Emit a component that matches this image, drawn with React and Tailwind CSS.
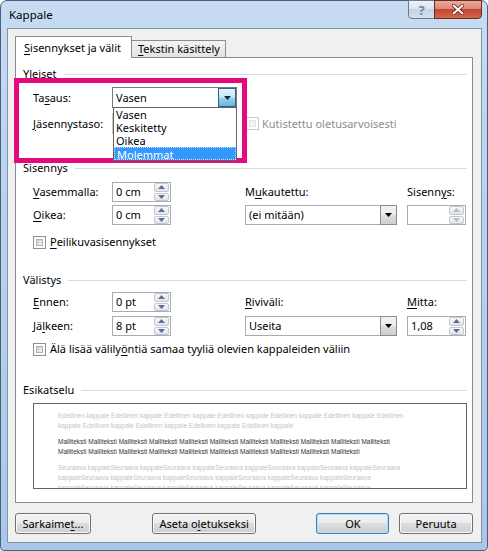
import React from 'react';

const font = "font-['Noto_Sans','Segoe_UI',sans-serif]";

function U({ children }) {
  return <span className="underline decoration-1 underline-offset-[2px]">{children}</span>;
}

function Arrow({ up, color }) {
  return (
    <svg width="7" height="4" viewBox="0 0 7 4">
      <path d={up ? 'M3.5 0L7 4H0z' : 'M0 0h7L3.5 4z'} fill={color} />
    </svg>
  );
}

function Spin({ value, disabled }) {
  const arrow = disabled ? '#b4bccb' : '#5b6d9e';
  return (
    <div className="w-[59px] h-[20px] border border-[#a5acb5] bg-white flex">
      <div className="flex-1 pl-[3px] flex items-center">{value}</div>
      <div className="w-[15px] flex flex-col gap-px mr-px">
        <div className="flex-1 border border-[#c3c7ce] rounded-[2px] bg-gradient-to-b from-[#f8f8f8] to-[#e2e4e8] flex items-center justify-center">
          <Arrow up color={arrow} />
        </div>
        <div className="flex-1 border border-[#c3c7ce] rounded-[2px] bg-gradient-to-b from-[#f8f8f8] to-[#e2e4e8] flex items-center justify-center">
          <Arrow color={arrow} />
        </div>
      </div>
    </div>
  );
}

function Combo({ value }) {
  return (
    <div className="w-[152px] h-[20px] border border-[#a5acb5] bg-white flex items-center">
      <span className="flex-1 pl-[3px]">{value}</span>
      <div className="w-[17px] h-[20px] -mr-px border border-[#8a8d93] bg-[linear-gradient(to_bottom,#f2f2f2_0%,#ebebeb_50%,#dddddd_50%,#cfcfcf_100%)] flex items-center justify-center">
        <Arrow color="#000" />
      </div>
    </div>
  );
}

function Check({ disabled }) {
  return (
    <div className={`w-[13px] h-[13px] border p-[2px] bg-white ${disabled ? 'border-[#c9c9c9]' : 'border-[#8e8f8f]'}`}>
      <div className={`w-full h-full border ${disabled ? 'border-[#e2e2e2] bg-[#f5f5f5]' : 'border-[#aeb3b9] bg-gradient-to-br from-[#cbcfd5] to-[#f6f6f6]'}`}></div>
    </div>
  );
}

function Btn({ children, className, primary }) {
  return (
    <div
      className={`${className} h-[21px] rounded-[3px] border ${
        primary ? 'border-[#3c7fb1] shadow-[inset_0_0_0_1px_#aee0f7]' : 'border-[#707070] shadow-[inset_0_0_0_1px_#fbfbfb]'
      } bg-[linear-gradient(to_bottom,#f2f2f2_0%,#ebebeb_50%,#dddddd_50%,#cfcfcf_100%)] flex items-center justify-center`}
    >
      {children}
    </div>
  );
}

function Group({ title, className }) {
  return (
    <div className={`flex items-center h-[16px] ${className}`}>
      <span>{title}</span>
      <div className="flex-1 h-px bg-[#d5dce2] ml-[7px]"></div>
    </div>
  );
}

const previous = [
  'Edellinen kappale Edellinen kappale Edellinen kappale Edellinen kappale Edellinen kappale Edellinen kappale Edellinen',
  'kappale Edellinen kappale Edellinen kappale Edellinen kappale Edellinen kappale',
];
const sample = ['Malliteksti '.repeat(11).trim(), 'Malliteksti '.repeat(10).trim()];
const next = [
  'Seuraava kappaleSeuraava kappaleSeuraava kappaleSeuraava kappaleSeuraava kappaleSeuraava kappaleSeuraava',
  'kappaleSeuraava kappaleSeuraava kappaleSeuraava kappaleSeuraava kappaleSeuraava kappaleSeuraava',
  'kappaleSeuraava kappaleSeuraava kappaleSeuraava kappaleSeuraava kappaleSeuraava kappaleSeuraava',
];
const alignments = ['Vasen', 'Keskitetty', 'Oikea', 'Molemmat'];

export default function App() {
  return (
    <div className={`w-[488px] h-[551px] ${font} text-[11px] leading-[16px] text-black`}>
      <div className="w-full h-full rounded-t-[7px] rounded-b-[4px] border border-[#4d6079] bg-[linear-gradient(to_bottom,#c7dcf2,#b9d4ef_30%,#a9c8e9)] flex flex-col">
        {/* title bar */}
        <div className="h-[27px] flex justify-between">
          <div className="pl-[8px] pt-[6px] text-[11.5px]">Kappale</div>
          <div className="flex -mt-px mr-[5px] h-[19px]">
            <div className="w-[27px] h-full rounded-bl-[4px] border border-[#6a7a90] bg-[linear-gradient(to_bottom,#edf2f8_0%,#dbe5f1_45%,#c4d3e6_50%,#d3e0ee_100%)] flex items-center justify-center text-[13px] font-bold text-[#7b8594]">
              ?
            </div>
            <div className="w-[48px] h-full -ml-px rounded-br-[4px] border border-[#6b2a20] bg-[linear-gradient(to_bottom,#e9a99b_0%,#dc8a76_45%,#c5452f_50%,#d2684f_100%)] flex items-center justify-center">
              <svg width="12" height="11" viewBox="0 0 12 11">
                <path d="M1.5 1.5l9 8M10.5 1.5l-9 8" stroke="#5a1d14" strokeWidth="3.6" strokeLinecap="round" />
                <path d="M1.5 1.5l9 8M10.5 1.5l-9 8" stroke="#ffffff" strokeWidth="2" strokeLinecap="round" />
              </svg>
            </div>
          </div>
        </div>

        {/* client */}
        <div className="ml-[6px] mr-[5px] h-[515px] border border-[#8393a8] bg-[#f0f0f0] pt-[7px] pl-[7px] pr-[8px] flex flex-col">
          {/* tabs */}
          <div className="flex h-[21px]">
            <div className="relative z-10 w-[117px] h-[22px] border border-b-0 border-[#898c95] bg-white pl-[8px] pt-[3px] whitespace-nowrap">
              <U>S</U>isennykset ja välit
            </div>
            <div className="self-end w-[95px] h-[17px] -ml-px border border-b-0 border-[#898c95] bg-gradient-to-b from-[#f3f3f3] to-[#e3e3e3] pl-[6px] leading-[16px] whitespace-nowrap">
              <U>T</U>ekstin käsittely
            </div>
          </div>

          {/* panel */}
          <div className="relative w-[458px] h-[446px] border border-[#898c95] bg-white pl-[7px] pr-[5px]">
            <Group title="Yleiset" className="mt-[8px]" />

            <div className="flex items-center h-[21px] mt-[5px] ml-[10px]">
              <div className="w-[79px]">
                Ta<U>s</U>aus:
              </div>
              <div className="relative w-[125px] h-[21px] border border-[#7a7a7a] bg-white flex items-center">
                <span className="flex-1 pl-[3px]">Vasen</span>
                <div className="w-[18px] h-[19px] border border-[#2c628b] bg-[linear-gradient(to_bottom,#e5f4fc_0%,#c4e5f6_50%,#98d1ef_50%,#6cb6df_100%)] flex items-center justify-center">
                  <Arrow color="#0d2a43" />
                </div>
                <div className="absolute z-20 left-[0px] top-full w-[124px] border border-[#646464] bg-white">
                  {alignments.map((a) => (
                    <div
                      key={a}
                      className={`h-[13px] leading-[13px] pl-[2px] ${
                        a === 'Molemmat' ? 'bg-[#3399ff] text-white border border-dotted border-[#c8e0f8] pl-[1px] leading-[11px]' : ''
                      }`}
                    >
                      {a}
                    </div>
                  ))}
                </div>
              </div>
            </div>

            <div className="flex items-center h-[21px] mt-[5px] ml-[10px]">
              <div className="w-[79px]">
                <U>J</U>äsennystaso:
              </div>
              <div className="w-[125px] h-[21px] border border-[#c9c9c9] bg-[#f4f4f4]"></div>
              <div className="ml-[9px] flex items-center gap-[3px] text-[#8d8d8d]">
                <Check disabled />
                <span>Kutistettu oletusarvoisesti</span>
              </div>
            </div>

            <Group title="Sisennys" className="mt-[26px]" />
            <div className="flex mt-[6px] ml-[10px]">
              <div className="flex flex-col gap-[3px]">
                <div className="flex items-center">
                  <div className="w-[79px]">
                    <U>V</U>asemmalla:
                  </div>
                  <Spin value="0 cm" />
                </div>
                <div className="flex items-center">
                  <div className="w-[79px]">
                    <U>O</U>ikea:
                  </div>
                  <Spin value="0 cm" />
                </div>
              </div>
              <div className="ml-[74px] flex flex-col gap-[3px]">
                <div className="h-[20px] flex items-center">
                  M<U>u</U>kautettu:
                </div>
                <Combo value="(ei mitään)" />
              </div>
              <div className="ml-[10px] flex flex-col gap-[3px]">
                <div className="h-[20px] flex items-center">
                  Sisenn<U>y</U>s:
                </div>
                <Spin value="" disabled />
              </div>
            </div>
            <div className="flex items-center gap-[4px] h-[16px] mt-[9px] ml-[10px]">
              <Check />
              <span>
                <U>P</U>eilikuvasisennykset
              </span>
            </div>

            <Group title="Välistys" className="mt-[22px]" />
            <div className="flex mt-[4px] ml-[10px]">
              <div className="flex flex-col gap-[4px]">
                <div className="flex items-center">
                  <div className="w-[79px]">
                    <U>E</U>nnen:
                  </div>
                  <Spin value="0 pt" />
                </div>
                <div className="flex items-center">
                  <div className="w-[79px]">
                    Jä<U>l</U>keen:
                  </div>
                  <Spin value="8 pt" />
                </div>
              </div>
              <div className="ml-[74px] flex flex-col gap-[4px]">
                <div className="h-[20px] flex items-center">
                  <U>R</U>iviväli:
                </div>
                <Combo value="Useita" />
              </div>
              <div className="ml-[10px] flex flex-col gap-[4px]">
                <div className="h-[20px] flex items-center">
                  <U>M</U>itta:
                </div>
                <Spin value="1,08" />
              </div>
            </div>
            <div className="flex items-center gap-[4px] h-[16px] mt-[5px] ml-[10px]">
              <Check />
              <span>
                Älä lisää välily<U>ö</U>ntiä samaa tyyliä olevien kappaleiden väliin
              </span>
            </div>

            <Group title="Esikatselu" className="mt-[25px]" />
            <div className="mt-[5px] ml-[10px] h-[86px] border border-[#646464] bg-white overflow-hidden pl-[24px] pt-[7px] font-['Liberation_Sans',sans-serif] text-[6.5px] leading-[10px] whitespace-nowrap">
              {previous.map((l) => (
                <div key={l} className="text-[#c4c4c4]">
                  {l}
                </div>
              ))}
              <div className="mt-[6px] text-[#333333]">
                {sample.map((l, i) => (
                  <div key={i}>{l}</div>
                ))}
              </div>
              <div className="mt-[6px] text-[#c4c4c4]">
                {next.map((l, i) => (
                  <div key={i}>{l}</div>
                ))}
              </div>
            </div>

            {/* highlight annotation */}
            <div className="absolute left-[-2px] top-[20px] w-[233px] h-[85px] border-[5px] border-[#e5087f] pointer-events-none"></div>
          </div>

          {/* buttons */}
          <div className="flex mt-[10px]">
            <Btn className="w-[76px]">
              Sarkaime<U>t</U>...
            </Btn>
            <Btn className="w-[105px] ml-[61px]">
              Aseta o<U>l</U>etukseksi
            </Btn>
            <Btn className="w-[73px] ml-[60px]" primary>
              OK
            </Btn>
            <Btn className="w-[74px] ml-[10px]">Peruuta</Btn>
          </div>
        </div>
      </div>
    </div>
  );
}
